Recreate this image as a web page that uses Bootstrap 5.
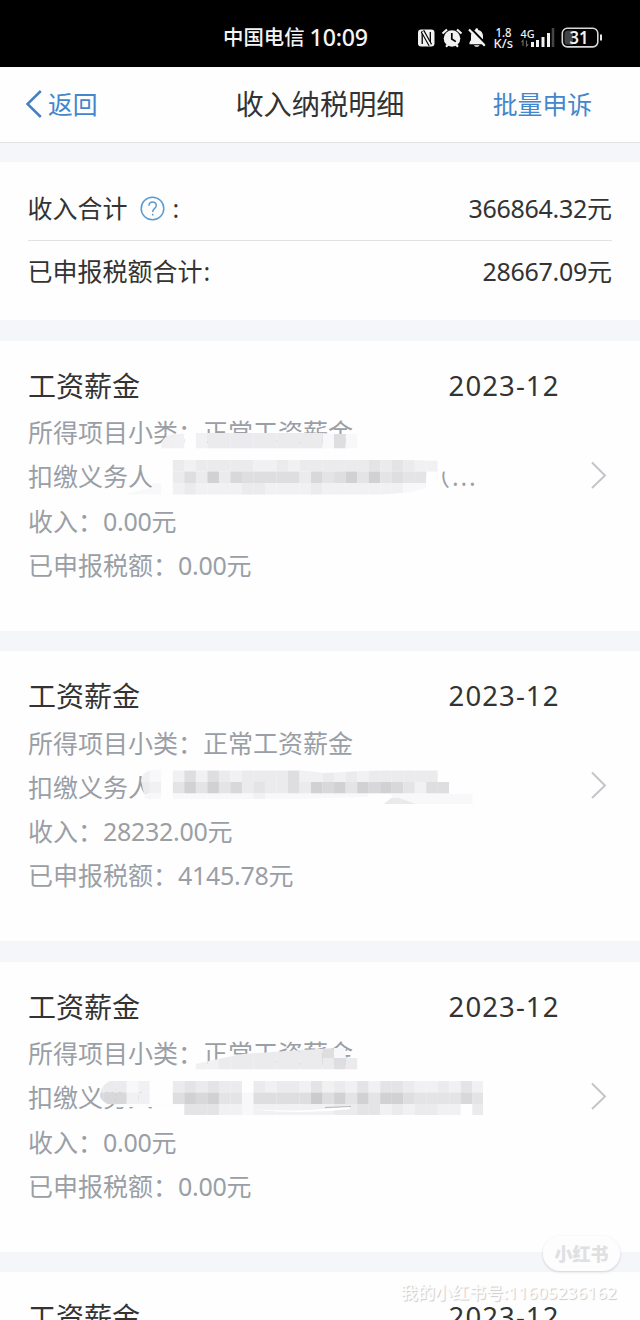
<!DOCTYPE html>
<html lang="zh-CN">
<head>
<meta charset="utf-8">
<meta name="viewport" content="width=device-width, initial-scale=1">
<title>收入纳税明细</title>
<link href="https://cdn.jsdelivr.net/npm/bootstrap@5.3.0/dist/css/bootstrap.min.css" rel="stylesheet">
<style>
  body { font-family: "Noto Sans", "Noto Sans CJK SC", sans-serif; color: #333; background: #f4f6fa; width: 640px; }
  .screen { height: 1320px; background: #f4f6fa; }
  .status-bar { height: 66.5px; background: #000; color: #f4f4f4; padding-left: 223px; }
  .carrier { font-size: 20.4px; line-height: 30px; font-weight: 500; }
  .clock { font-size: 23.2px; line-height: 30px; font-weight: 500; margin-left: 5px; letter-spacing: -.2px; }
  .status-icons { left: 414px; top: 22px; }
  .title-bar { height: 76px; border-bottom: 1.5px solid #e2e2e2; background: #fefefe; }
  .title-bar > * { flex: 0 0 33.3333%; line-height: 74px; }
  .link-blue { color: #4486cc; font-size: 24.8px; }
  .page-title { font-size: 28.2px; color: #333; white-space: nowrap; }
  .summary { margin-top: 19.5px; height: 158px; padding: 15.5px 28px 0 27.5px; background: #fefefe; font-size: 25px; }
  .summary-row { height: 62.5px; line-height: 61px; }
  .summary-row + .summary-row { border-top: 1.5px solid #e2e2e2; }
  .num { letter-spacing: -.3px; }
  .record { margin-top: 20.5px; height: 290px; padding: 21px 28px 0; background: #fefefe; }
  .record-head { height: 48.5px; line-height: 49px; font-size: 28px; padding-right: 52.5px; }
  .record-date { letter-spacing: 1.1px; font-size: 27.5px; line-height: 48px; }
  .record-line { height: 44.3px; line-height: 44.3px; font-size: 25px; color: #9a9fa6; white-space: nowrap; }
  .payer-tail { margin-left: 272px; letter-spacing: 1.9px; }
  .chev { right: 32px; top: 120px; }
  .mosaic { left: 0; top: 0; }
  .stamp { right: 20px; top: 1236px; width: 77px; height: 35px; background: rgba(253,253,253,.94); box-shadow: 0 1px 3px rgba(0,0,0,.16); color: #dfe0e2; font-size: 18px; font-weight: 900; line-height: 36px; }
  .stamp-id { right: 23px; top: 1281px; font-size: 16.8px; line-height: 24px; font-weight: 500; color: rgba(255,255,255,.95); text-shadow: 1px 1px 1px rgba(0,0,0,.2); letter-spacing: .28px; white-space: nowrap; }
</style>
</head>
<body>
<div class="screen position-relative overflow-hidden">

  <header class="status-bar d-flex align-items-center position-relative">
    <span class="carrier pt-2">中国电信</span><span class="clock pt-2">10:09</span>
    <svg class="status-icons position-absolute" width="192" height="32" viewBox="414 22 192 32" fill="none">
      <rect x="418" y="29.500" width="16.500" height="17" rx="3.200" fill="#f2f2f2"/>
      <path d="M422.200 44V31.500M430.300 45V32" stroke="#000" stroke-width="1.300"/>
      <path d="M422.500 31l7.800 14" stroke="#000" stroke-width="4"/>
      <path d="M422.700 31.500l7.600 13.500" stroke="#f2f2f2" stroke-width="1.700"/>
      <circle cx="452" cy="38.500" r="8.300" fill="#f2f2f2"/>
      <path d="M442.500 33.500l4.500-4M461.500 33.500l-4.500-4M446 46.800l2-2M458 46.800l-2-2" stroke="#f2f2f2" stroke-width="2.200"/>
      <path d="M451.800 33v6l4 2.600" stroke="#000" stroke-width="1.700"/>
      <path d="M469.500 43v-.8l1.500-2.200v-4c0-3.500 1.500-5.500 4.200-6 0-2.200 3-2.200 3 0 3 .6 4.800 3 4.800 6v4l2.300 3.200v1h-15.800z" fill="#f2f2f2"/>
      <path d="M474 45.200h5.500c-.8 2.200-4.700 2.200-5.500 0z" fill="#f2f2f2"/>
      <path d="M470.500 28l16 16.500" stroke="#000" stroke-width="2"/>
      <path d="M469 29.500l15.800 16.300" stroke="#f2f2f2" stroke-width="2.200"/>
      <g fill="#f2f2f2" font-family="Noto Sans, sans-serif" font-weight="500">
        <text x="495.500" y="37" font-size="12" textLength="16" lengthAdjust="spacingAndGlyphs">1.8</text>
        <text x="493.500" y="48.200" font-size="12.500" textLength="19.500" lengthAdjust="spacingAndGlyphs">K/s</text>
        <text x="520.500" y="37.500" font-size="11.500" textLength="14" lengthAdjust="spacingAndGlyphs">4G</text>
      </g>
      <path d="M523 46v-5.500l-1.600 1.600M526.500 40.500v5.500l1.600-1.600" stroke="#666" stroke-width="1.200"/>
      <path d="M532.500 42v5M537.500 40v7M543 37v10M548.500 33v14" stroke="#f2f2f2" stroke-width="3"/>
      <path d="M553 28v19" stroke="#444" stroke-width="2.600"/>
      <rect x="562.300" y="28.300" width="35.500" height="18.600" rx="5" stroke="#d8d8d8" stroke-width="1.600"/>
      <path d="M568 30.500h5v14.200h-5a3.500 3.500 0 0 1-3.500-3.500v-7.200a3.500 3.500 0 0 1 3.500-3.500z" fill="#444"/>
      <path d="M601 34.500v6" stroke="#e8e8e8" stroke-width="2"/>
      <text x="569.500" y="43.700" font-family="Noto Sans, sans-serif" font-size="17" font-weight="600" fill="#f2f2f2" textLength="19" lengthAdjust="spacingAndGlyphs">31</text>
    </svg>
  </header>

  <nav class="title-bar d-flex align-items-stretch">
    <div class="link-blue d-flex align-items-center" style="padding-left:25px">
      <svg width="17" height="28" viewBox="0 0 17 28" fill="none" stroke="#4480c4" stroke-width="2.500"><path d="M15.800 1L2.500 14l13.300 13"/></svg>
      <span style="margin-left:6px">返回</span>
    </div>
    <div class="page-title d-flex justify-content-center">收入纳税明细</div>
    <div class="link-blue d-flex justify-content-end" style="padding-right:48px">批量申诉</div>
  </nav>

  <section class="summary">
    <div class="summary-row d-flex justify-content-between">
      <span class="d-flex align-items-center">收入合计
        <svg style="margin-left:12px;margin-right:8px" width="25" height="25" viewBox="0 0 25 25" fill="none" stroke="#5a9bd0" stroke-width="1.500"><circle cx="12.500" cy="12.500" r="11.300"/><path d="M9 9.700c0-4.800 7.300-4.800 7.300-.3 0 3-3.600 2.900-3.600 6.500M12.700 17.800v1.600"/></svg>
        <span>:</span></span>
      <span><span class="num">366864.32</span>元</span>
    </div>
    <div class="summary-row d-flex justify-content-between"><span>已申报税额合计<span style="margin-left:1px">:</span></span><span><span class="num">28667.09</span>元</span></div>
  </section>

  <section class="record position-relative">
    <div class="record-head d-flex justify-content-between"><span>工资薪金</span><span class="record-date">2023-12</span></div>
    <div class="record-line">所得项目小类：正常工资薪金</div>
    <div class="record-line">扣缴义务人<span class="payer-tail">（...</span></div>
    <div class="record-line">收入：<span class="num">0.00</span>元</div>
    <div class="record-line">已申报税额：<span class="num">0.00</span>元</div>
    <svg class="chev position-absolute" width="18" height="28" viewBox="0 0 18 28" fill="none" stroke="#c3c5c8" stroke-width="2"><path d="M2 1.500L15 14.500 2 27"/></svg>
  </section>

  <section class="record position-relative">
    <div class="record-head d-flex justify-content-between"><span>工资薪金</span><span class="record-date">2023-12</span></div>
    <div class="record-line">所得项目小类：正常工资薪金</div>
    <div class="record-line">扣缴义务人</div>
    <div class="record-line">收入：<span class="num">28232.00</span>元</div>
    <div class="record-line">已申报税额：<span class="num">4145.78</span>元</div>
    <svg class="chev position-absolute" width="18" height="28" viewBox="0 0 18 28" fill="none" stroke="#c3c5c8" stroke-width="2"><path d="M2 1.500L15 14.500 2 27"/></svg>
  </section>

  <section class="record position-relative">
    <div class="record-head d-flex justify-content-between"><span>工资薪金</span><span class="record-date">2023-12</span></div>
    <div class="record-line">所得项目小类：正常工资薪金</div>
    <div class="record-line">扣缴义务人</div>
    <div class="record-line">收入：<span class="num">0.00</span>元</div>
    <div class="record-line">已申报税额：<span class="num">0.00</span>元</div>
    <svg class="chev position-absolute" width="18" height="28" viewBox="0 0 18 28" fill="none" stroke="#c3c5c8" stroke-width="2"><path d="M2 1.500L15 14.500 2 27"/></svg>
  </section>

  <section class="record position-relative">
    <div class="record-head d-flex justify-content-between"><span>工资薪金</span><span class="record-date">2023-12</span></div>
  </section>

  <!-- privacy mosaic painted over the payer names -->
  <svg class="mosaic position-absolute pe-none" width="640" height="1320" viewBox="0 0 640 1320">
    <defs>
      <clipPath id="brush1"><path d="M161 443q4-8 12-9l24-1h125l12 1h24v25l93 2v12h-9l-8 6v-1h-8v10l-14 4-44 4-30 3H173l-13 1H118q8-8 34-12l3-30z"/></clipPath>
      <clipPath id="brush2"><path d="M141 780q2-8 10-10l22-1h120l30 4 60-3h66v24h32v10H384l8-6-25-1-70 2H145z"/></clipPath>
      <clipPath id="brush3"><path d="M165 1070l35-7 42-9 60-4 34-2h22v32h125v35H184v-8h-66q-14-2-18-10 0-14 15-18l50-5z"/></clipPath>
    </defs>
    <g id="veil1" clip-path="url(#brush1)"></g>
    <g id="veil2" clip-path="url(#brush2)"></g>
    <g id="veil3" clip-path="url(#brush3)"></g>
    <path d="M120 1104h60v3h-60z" fill="#fdfdfd"/>
    <path d="M384 804l7-6h8l17 6z" fill="#eaeaec"/>
    <path d="M250 1109q55 4 100-3v3q-50 6-100 0z" fill="#fff"/>
    <path d="M325 1107.500l26-1" stroke="#b5b6b8" stroke-width="1.200"/>
  </svg>

  <div class="stamp rounded-pill text-center position-absolute">小红书</div>
  <div class="stamp-id position-absolute">我的小红书号:11605236162</div>
</div>

<script src="https://cdn.jsdelivr.net/npm/bootstrap@5.3.0/dist/js/bootstrap.bundle.min.js"></script>
<script>
  // Each row: target group, grid row, first grid column, darkness per cell.
  const CELL = 11.52, rows = [
    ['veil1', 37, 14, '22023333333333151'],
    ['veil1', 38, 14, '22023333333333151'],
    ['veil1', 39, 10, '00000000000000000000000000'],
    ['veil1', 40, 13, '0032333332232333333434322000'],
    ['veil1', 41, 13, '003537365555536457474544'],
    ['veil1', 42, 10, '1111023222233222232222222110'],
    ['veil2', 66, 12, '11'],
    ['veil2', 67, 12, '210252532333352232323333330'],
    ['veil2', 68, 12, '320474746343353767476764255'],
    ['veil2', 69, 12, '11011111112111111111001111111'],
    ['veil3', 91, 14, '0022233333333351'],
    ['veil3', 92, 14, '00022333333333353'],
    ['veil3', 93, 8, '0000000000000000000000000000000000'],
    ['veil3', 94, 8, '33312003434330323324232424432232420'],
    ['veil3', 95, 8, '66622005767441555558574747754444640'],
    ['veil3', 96, 16, '44422122222223344232332203']
  ];
  for (const [id, r, c, levels] of rows) {
    const group = document.getElementById(id);
    [...levels].forEach((d, i) => {
      const v = 254 - d * 6.4;
      const cell = document.createElementNS('http://www.w3.org/2000/svg', 'rect');
      cell.setAttribute('x', (c + i) * CELL);
      cell.setAttribute('y', r * 11.5);
      cell.setAttribute('width', CELL + .1);
      cell.setAttribute('height', 11.6);
      cell.setAttribute('fill', `rgb(${v},${v},${Math.min(255, v + 2)})`);
      group.appendChild(cell);
    });
  }
</script>
</body>
</html>
